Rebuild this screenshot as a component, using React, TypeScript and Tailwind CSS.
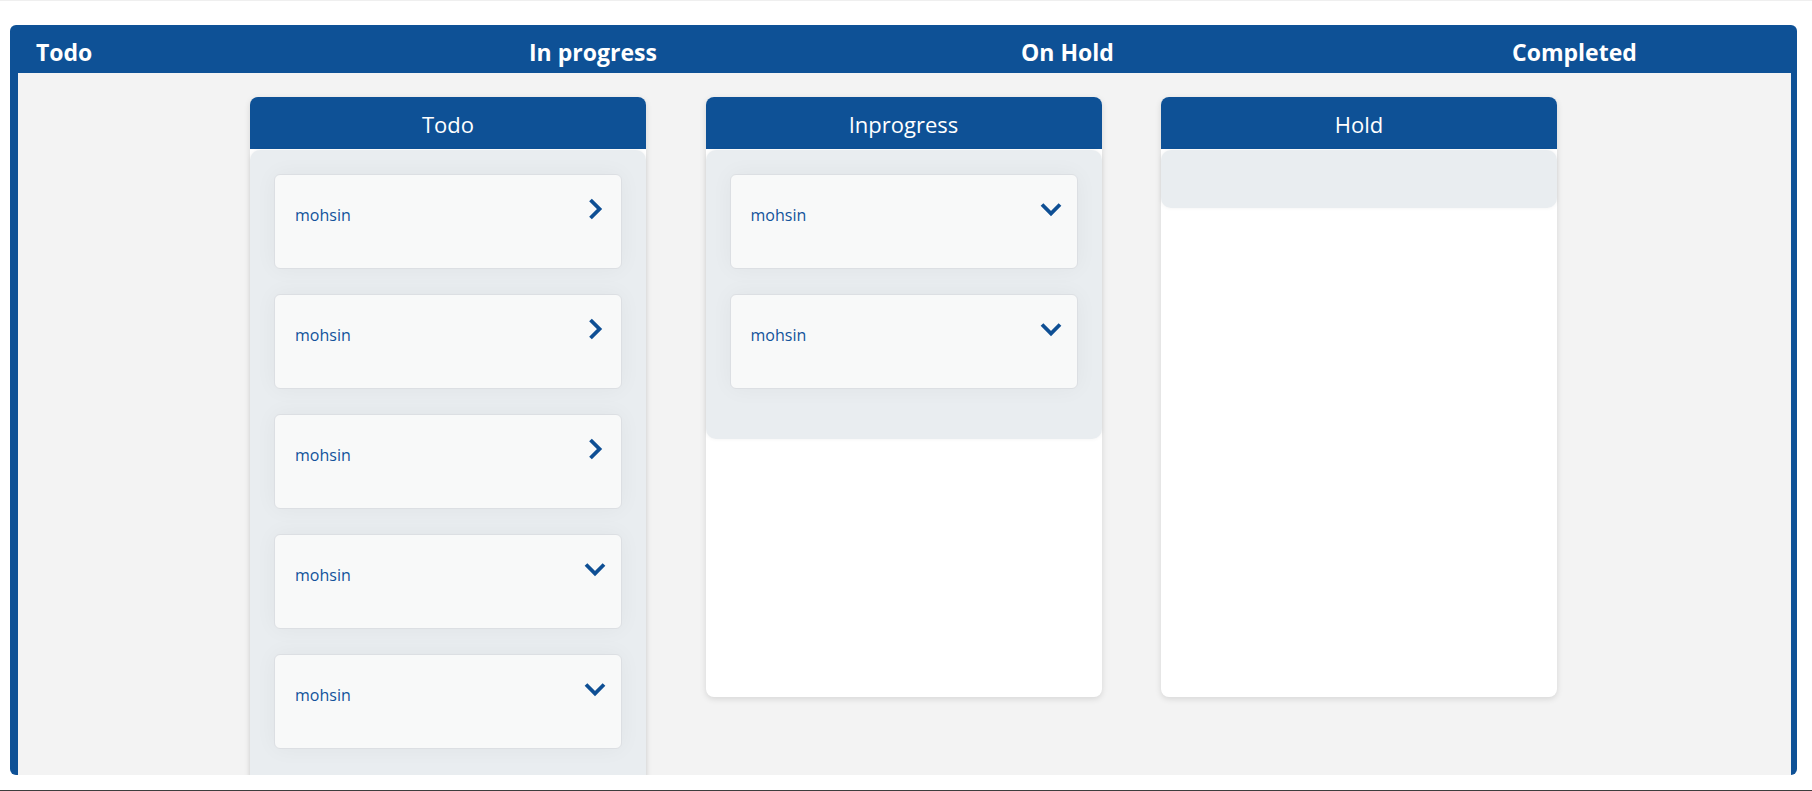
import React from "react";

type Dir = "right" | "down";

const Chevron = ({ dir }: { dir: Dir }) => (
  <svg width="24" height="24" viewBox="0 0 24 24" fill="none" className="shrink-0">
    {dir === "down" ? (
      <path d="M3 7.5 L12 16.5 L21 7.5" stroke="#0e4f94" strokeWidth="3.8" strokeLinejoin="miter" />
    ) : (
      <path d="M7.5 3 L16.5 12 L7.5 21" stroke="#0e4f94" strokeWidth="3.8" strokeLinejoin="miter" />
    )}
  </svg>
);

const Card = ({ dir }: { dir: Dir }) => (
  <div className="h-[95px] mb-[25px] bg-[#f8f9f9] border border-[#dcdfe3] rounded-[6px] shadow-[0_0_22px_rgba(0,0,0,0.045)] flex justify-between items-start pl-[20px] pr-[14px] pt-[22px]">
    <span className="mt-[7px] text-[16px] leading-[22px] text-[#12539b]">mohsin</span>
    <Chevron dir={dir} />
  </div>
);

const Column = ({ title, cards }: { title: string; cards: Dir[] }) => (
  <div className="w-[396px] min-h-[600px] shrink-0 bg-white rounded-[8px] shadow-[0_2px_6px_rgba(0,0,0,0.12)] flex flex-col">
    <div className="h-[52px] bg-[#0e5196] rounded-t-[8px] flex items-center justify-center pt-[2px] text-white text-[22px] leading-none">
      {title}
    </div>
    <div className="mt-[1px] bg-[#e9edf0] rounded-[10px] px-[24px] pt-[24px] pb-[25px] min-h-[58px] shadow-[0_0_4px_rgba(0,0,0,0.06)]">
      {cards.map((d, i) => (
        <Card key={i} dir={d} />
      ))}
    </div>
  </div>
);

export default function App() {
  return (
    <div className="w-[1812px] h-[791px] bg-white flex flex-col overflow-hidden" style={{ fontFamily: "'Open Sans', 'Noto Sans', sans-serif" }}>
      <div className="h-[1px] bg-[#efefef]" />
      <div className="mt-[24px] ml-[10px] w-[1787px] h-[750px] bg-[#0e5196] rounded-[6px] overflow-hidden flex flex-col">
        <div className="h-[48px] shrink-0 flex items-center pl-[26px] pt-[6px] text-white font-bold text-[23px]">
          <div className="w-[493px]">Todo</div>
          <div className="w-[492px]">In progress</div>
          <div className="w-[491px]">On Hold</div>
          <div className="w-[200px]">Completed</div>
        </div>
        <div className="flex-1 ml-[8px] mr-[6px] bg-[#f3f3f3] overflow-hidden flex items-start gap-[59.5px] pl-[232px] pt-[24px]">
          <Column title="Todo" cards={["right", "right", "right", "down", "down"]} />
          <Column title="Inprogress" cards={["down", "down"]} />
          <Column title="Hold" cards={[]} />
        </div>
      </div>
      <div className="h-[15px]" />
      <div className="h-[1px] bg-[#3d3d3d]" />
    </div>
  );
}
